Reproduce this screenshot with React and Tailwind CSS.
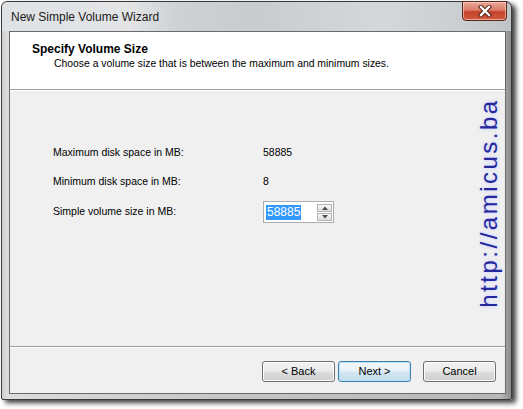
import React from "react";

const font = { fontFamily: '"Liberation Sans", Arial, sans-serif' };

function WinButton({ children, focused }) {
  return (
    <div
      className={
        "w-[73px] h-[21px] rounded-[3px] border flex items-center justify-center text-[11px] text-black " +
        (focused
          ? "border-[#3c7fb1] bg-[linear-gradient(180deg,#f4f9fc_0%,#e6f1f8_48%,#d3e6f2_52%,#c5ddee_100%)] shadow-[inset_0_0_0_1px_#bfe2f6]"
          : "border-[#707070] bg-[linear-gradient(180deg,#f2f2f2_0%,#ebebeb_48%,#dddddd_52%,#cfcfcf_100%)] shadow-[inset_0_0_0_1px_#fcfcfc]")
      }
    >
      {children}
    </div>
  );
}

export default function App() {
  return (
    <div className="w-[523px] h-[409px] bg-white relative overflow-hidden" style={font}>
      <div className="ml-[1px] mt-[1px] w-[511px] h-[399px] border border-[#3a3a3a] rounded-t-[6px] rounded-b-[2px] flex flex-col bg-[linear-gradient(90deg,#cfcfcf_0%,#dcdcdc_1%,#c4c4c4_50%,#b8b8b8_98%,#8a8a8a_100%)] shadow-[4px_3px_5px_rgba(0,0,0,0.75)]">
        {/* title bar */}
        <div className="h-[29px] flex items-start justify-between rounded-t-[6px] bg-[linear-gradient(90deg,#dfe2e5_0%,#e2e4e6_25%,#cdd1d4_35%,#c8ccd0_50%,#d5d8db_75%,#c9cdd0_92%,#bfc3c6_100%)]">
          <div className="pl-[9px] pt-[8px] text-[12px] leading-[14px] text-[#1b1b1b]">
            New Simple Volume Wizard
          </div>
          <div className="mr-[4px] w-[45px] h-[20px] -mt-px rounded-b-[4px] border border-[#5d2418] bg-[linear-gradient(180deg,#e9a99b_0%,#dc7c68_45%,#c4412a_55%,#cf5a3f_100%)] shadow-[inset_0_0_0_1px_rgba(255,220,210,0.6)] flex items-center justify-center">
            <svg width="14" height="12" viewBox="0 0 14 12">
              <path d="M3 2 L11 10 M11 2 L3 10" stroke="#4a1a12" strokeWidth="4.2" strokeLinecap="square" />
              <path d="M3 2 L11 10 M11 2 L3 10" stroke="#ffffff" strokeWidth="2.4" strokeLinecap="square" />
            </svg>
          </div>
        </div>
        {/* body row with frames */}
        <div className="flex-1 flex pl-[7px] pr-[5px] pb-[5px]">
          <div className="flex-1 border border-[#6a6a6a] bg-[#f0f0f0] flex flex-col">
            {/* header */}
            <div className="h-[58px] bg-white border-b border-[#a0a0a0] pl-[22px] pt-[10px]">
              <div className="text-[12px] leading-[14px] font-bold text-black">Specify Volume Size</div>
              <div className="pl-[22px] pt-[1px] text-[10.4px] leading-[14px] text-black">
                Choose a volume size that is between the maximum and minimum sizes.
              </div>
            </div>
            <div className="h-px bg-white" />
            {/* content */}
            <div className="flex-1 pl-[43px] pt-[54px] text-[10.5px] text-black">
              <div className="flex h-[28px]">
                <div className="w-[210px] leading-[14px]">Maximum disk space in MB:</div>
                <div className="leading-[14px]">58885</div>
              </div>
              <div className="flex h-[28px] pt-px">
                <div className="w-[210px] leading-[14px]">Minimum disk space in MB:</div>
                <div className="leading-[14px]">8</div>
              </div>
              <div className="flex">
                <div className="w-[210px] leading-[14px] pt-[3px]">Simple volume size in MB:</div>
                <div className="w-[71px] h-[22px] border border-[#abadb3] bg-white flex items-center pl-[2px] pr-[1px]">
                  <span className="bg-[#3399ff] text-white leading-[15px] px-[1px] text-[12px]">58885</span>
                  <div className="ml-auto flex flex-col gap-[1px]">
                    <div className="w-[15px] h-[8px] border border-[#b4b4b4] bg-[linear-gradient(180deg,#f6f6f6,#dedede)] flex items-center justify-center">
                      <svg width="6" height="4" viewBox="0 0 6 4"><path d="M0 4 L3 0.5 L6 4 Z" fill="#4d4d4d" /></svg>
                    </div>
                    <div className="w-[15px] h-[8px] border border-[#b4b4b4] bg-[linear-gradient(180deg,#f6f6f6,#dedede)] flex items-center justify-center">
                      <svg width="6" height="4" viewBox="0 0 6 4"><path d="M0 0 L3 3.5 L6 0 Z" fill="#4d4d4d" /></svg>
                    </div>
                  </div>
                </div>
              </div>
            </div>
            {/* separator */}
            <div className="h-px bg-[#a0a0a0]" />
            <div className="h-px bg-white" />
            {/* footer */}
            <div className="h-[45px] flex justify-end pr-[9px] pt-[13px]">
              <WinButton>&lt; Back</WinButton>
              <div className="w-[3px]" />
              <WinButton focused>Next &gt;</WinButton>
              <div className="w-[12px]" />
              <WinButton>Cancel</WinButton>
            </div>
          </div>
        </div>
      </div>
      {/* watermark */}
      <div className="absolute left-[489px] top-[203px] -translate-x-1/2 -translate-y-1/2 -rotate-90 whitespace-nowrap text-[24px] leading-[28px] tracking-[2.5px] text-[#24289c] [text-shadow:0_0_3px_#c9ccff,0_0_5px_#dfe1ff]">
        http://amicus.ba
      </div>
    </div>
  );
}
